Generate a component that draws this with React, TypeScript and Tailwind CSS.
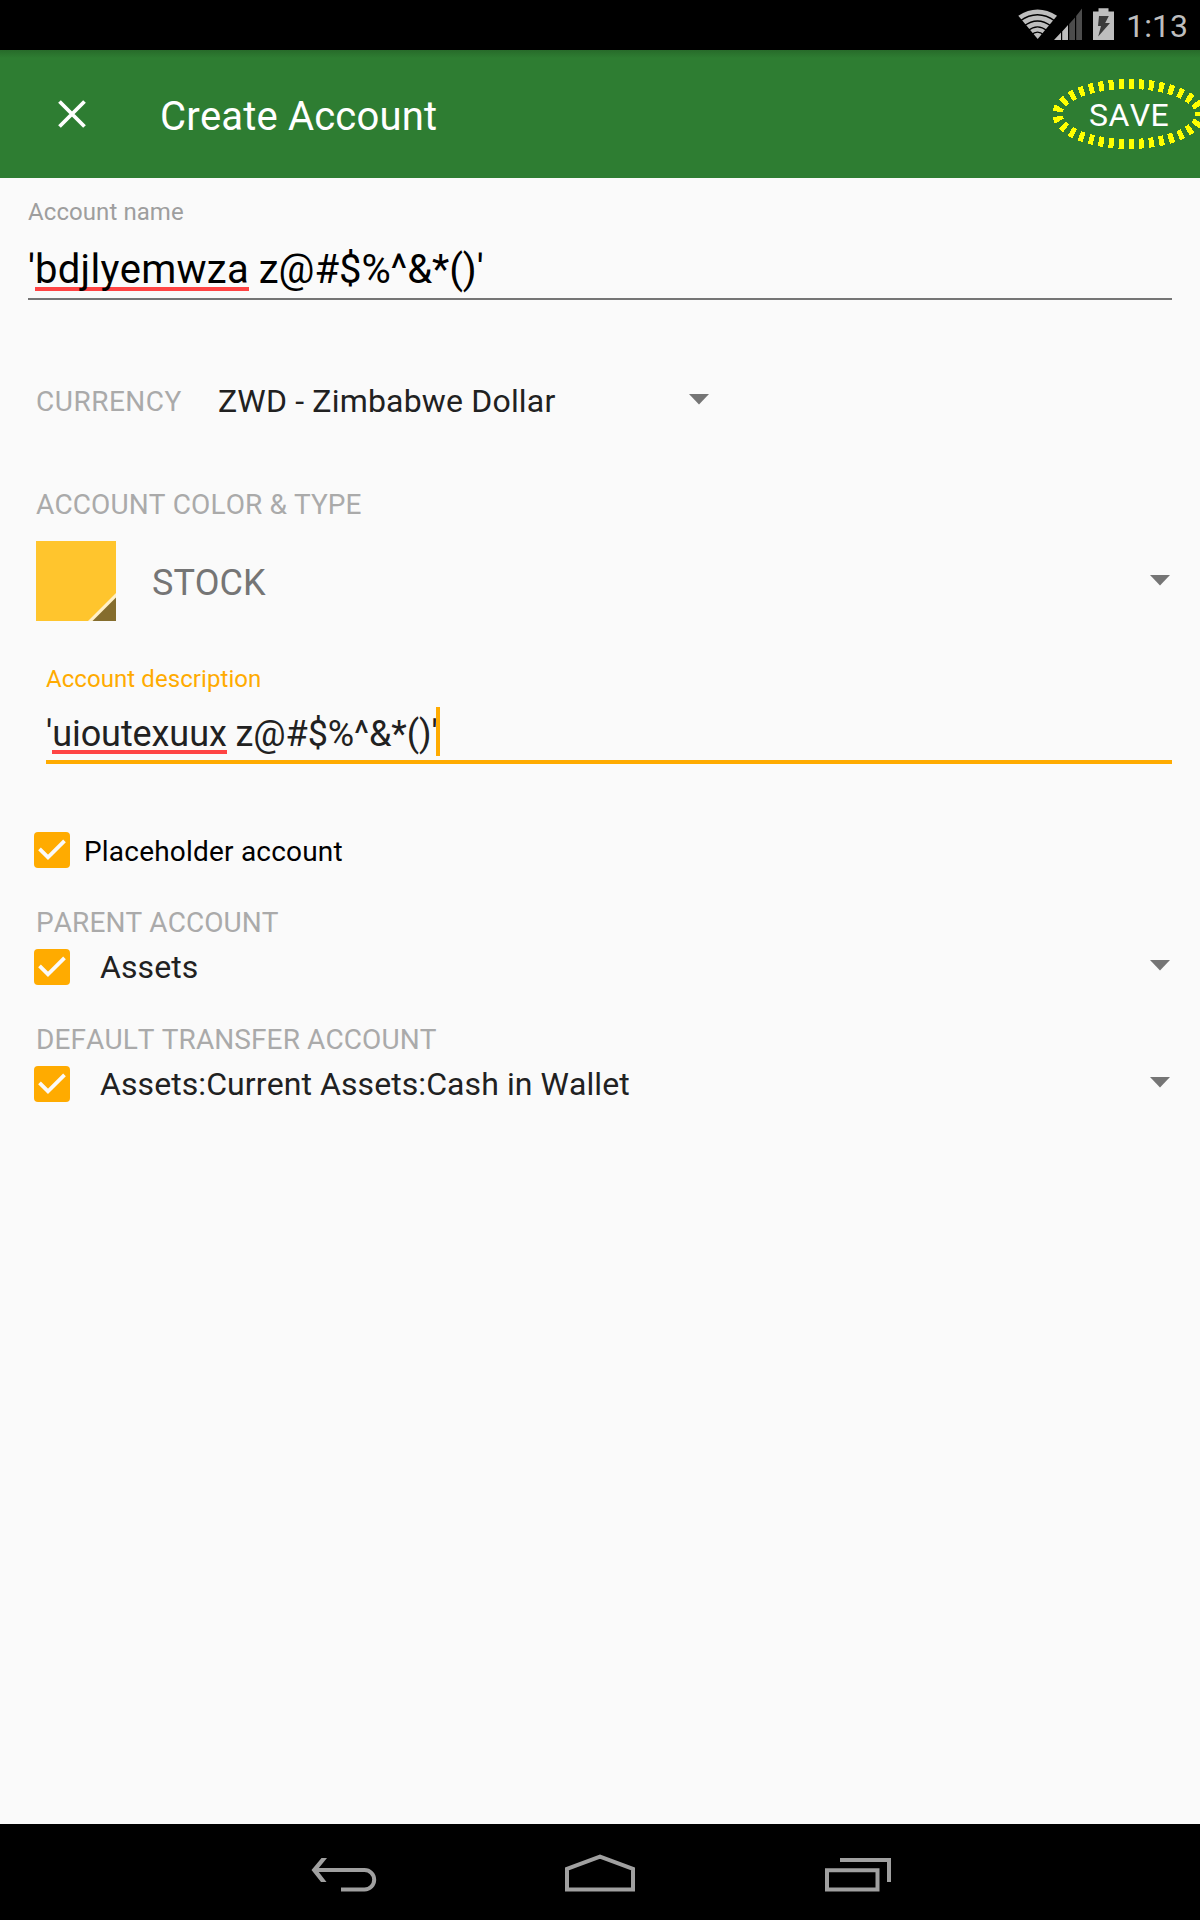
function Arrow({ className = "" }: { className?: string }) {
  return (
    <svg className={className} width="20" height="11" viewBox="0 0 20 11">
      <path d="M0 0H20L10 10.5Z" fill="#757575" />
    </svg>
  );
}

function CheckBox() {
  return (
    <svg width="36" height="36" viewBox="0 0 36 36" className="shrink-0">
      <rect width="36" height="36" rx="4" fill="#ffab00" />
      <path d="M5.5 16.8L14 25.4L30.5 8.9" fill="none" stroke="#fafafa" strokeWidth="3.8" />
    </svg>
  );
}

function StatusIcons() {
  return (
    <svg width="114" height="50" viewBox="1000 0 114 50" className="shrink-0">
      <path d="M1018.3 15.8Q1037.5 3.2 1057 15.8L1037.7 39Z" fill="#bebebe" />
      <g fill="none" stroke="#000" strokeWidth="1.3">
        <path d="M1020 21Q1037.5 8.5 1055 21" />
        <path d="M1024 26Q1037.5 16 1051 26" />
        <path d="M1028 30.6Q1037.5 23 1047 30.6" />
        <path d="M1031 35.2Q1037.5 29 1044 35.2" />
      </g>
      <path d="M1054 40L1061 32.5V40ZM1062.2 40V31.5L1068 25V40Z" fill="#bebebe" />
      <path d="M1069.2 40V24L1075 17.5V40ZM1076.2 40V16L1082 8.5V40Z" fill="#4c4c4c" />
      <path d="M1093 11.5H1098.5V8.3H1108.5V11.5H1114V40H1093Z" fill="#bebebe" />
      <path d="M1099 16H1108.8L1105.2 23H1110L1098.2 36.5L1101 26H1098Z" fill="#3b3b3b" />
    </svg>
  );
}

export default function App() {
  return (
    <div className="flex h-[1920px] w-[1200px] flex-col bg-[#fafafa] font-['Roboto',sans-serif] text-[#212121] [font-kerning:none]">
      <div className="flex h-[50px] shrink-0 items-center justify-end bg-black pr-3">
        <StatusIcons />
        <span className="ml-3 mt-0.5 text-[32px] leading-10 text-[#bebebe]">1:13</span>
      </div>

      <header className="flex h-32 shrink-0 items-center bg-[#2e7d32] bg-[linear-gradient(#276b2a,#2e7d32_8px)] text-white">
        <svg width="28" height="28" viewBox="0 0 28 28" className="ml-[58px]">
          <path d="M1.5 1.5L26.5 26.5M26.5 1.5L1.5 26.5" stroke="#fff" strokeWidth="3.8" />
        </svg>
        <h1 className="ml-[74px] mt-[5px] text-[40px] leading-[48px] tracking-[0.17px]">Create Account</h1>
        <button className="relative ml-auto mr-[31px] mt-0.5 w-20 text-left text-[32px] leading-10 tracking-[0.4px]">
          SAVE
          <svg className="absolute left-[-39px] top-[-17px]" width="150" height="72" viewBox="1050 78 150 72" shapeRendering="crispEdges">
            <ellipse cx="1128.8" cy="114" rx="71.5" ry="30" fill="none" stroke="#ffff00" strokeWidth="10" pathLength="330" strokeDasharray="5 5" strokeDashoffset="2.5" />
          </svg>
        </button>
      </header>

      <main className="flex flex-1 flex-col pt-[18px]">
        <section className="mx-7 border-b-2 border-[#757575] pb-1">
          <div className="text-[24px] leading-8 tracking-[0.08px] text-[#9e9e9e]">Account name</div>
          <div className="mt-[18px] flex text-[40px] leading-[48px] text-black">
            <span>'</span>
            <span className="relative tracking-[0.28px]">
              <i className="absolute bottom-[3px] left-0 h-1 w-full bg-[#ff4444]" />
              <b className="relative font-normal">bdjlyemwza</b>
            </span>
            <span className="whitespace-pre tracking-[-0.08px]"> z@#$%^&amp;*()'</span>
          </div>
        </section>

        <section className="mt-[81px] flex h-10 items-center px-9">
          <span className="mt-px w-[146px] text-[28px] leading-9 tracking-[0.5px] text-[#aaaaaa]">CURRENCY</span>
          <div className="ml-9 flex w-[491px] items-center justify-between">
            <span className="text-[32px] leading-10 tracking-[0.18px]">ZWD - Zimbabwe Dollar</span>
            <Arrow className="-mt-[3px]" />
          </div>
        </section>

        <section className="mt-[66px] pl-9 pr-[30px]">
          <div className="text-[28px] leading-9 tracking-[0.12px] text-[#aaaaaa]">ACCOUNT COLOR &amp; TYPE</div>
          <div className="mt-[18px] flex items-center">
            <svg width="80" height="80" viewBox="0 0 80 80">
              <rect width="80" height="80" fill="#ffc52d" />
              <path d="M52 80L80 52V80Z" fill="#fff0c8" />
              <path d="M56.5 80L80 56.5V80Z" fill="#856d2d" />
            </svg>
            <span className="ml-9 mt-[3px] text-[36px] leading-[44px] text-[#757575]">STOCK</span>
            <Arrow className="-mt-0.5 ml-auto" />
          </div>
        </section>

        <section className="ml-[46px] mr-7 mt-[42px] border-b-4 border-[#ffab00] pb-0.5">
          <div className="text-[24px] leading-8 tracking-[0.07px] text-[#ffab00]">Account description</div>
          <div className="mt-[15px] flex h-12 items-start text-[36px] leading-[48px] tracking-[-0.08px]">
            <span>'</span>
            <span className="relative">
              <i className="absolute bottom-1 left-0 h-1 w-full bg-[#ff4444]" />
              <b className="relative font-normal">uioutexuux</b>
            </span>
            <span className="whitespace-pre"> z@#$%^&amp;*()'</span>
            <i className="-ml-0.5 -mt-[3px] h-[49px] w-1 bg-[#ffab00]" />
          </div>
        </section>

        <section className="mt-[68px] flex h-9 items-center pl-[34px]">
          <CheckBox />
          <span className="ml-3.5 mt-[3px] text-[28px] leading-9 tracking-[0.2px] text-black">Placeholder account</span>
        </section>

        <section className="mt-[37px] pl-[34px] pr-[30px]">
          <div className="pl-0.5 text-[28px] leading-9 tracking-[0.08px] text-[#aaaaaa]">PARENT ACCOUNT</div>
          <div className="mt-2 flex h-9 items-center">
            <CheckBox />
            <span className="ml-[30px] text-[32px] leading-9 tracking-[0.1px]">Assets</span>
            <Arrow className="-mt-[3px] ml-auto" />
          </div>
        </section>

        <section className="mt-[37px] pl-[34px] pr-[30px]">
          <div className="pl-0.5 text-[28px] leading-9 tracking-[0.1px] text-[#aaaaaa]">DEFAULT TRANSFER ACCOUNT</div>
          <div className="mt-2 flex h-9 items-center">
            <CheckBox />
            <span className="ml-[30px] text-[32px] leading-9 tracking-[0.08px]">Assets:Current Assets:Cash in Wallet</span>
            <Arrow className="-mt-[3px] ml-auto" />
          </div>
        </section>
      </main>

      <nav className="h-24 shrink-0 bg-black">
        <svg width="1200" height="96" viewBox="0 1824 1200 96" fill="none" stroke="#a0a0a0" strokeWidth="4">
          <path d="M316 1870H364.5A9.7 9.7 0 0 1 364.5 1889.4H341" />
          <path d="M321.5 1858H327L317.2 1870L326.5 1882H321L311.5 1870Z" fill="#a0a0a0" stroke="none" />
          <path d="M567 1868.8L600 1856.7L633 1868.8V1889.5H567Z" />
          <path d="M827 1870.2H877.5V1889.5H827ZM840 1860H889V1882" />
        </svg>
      </nav>
    </div>
  );
}
